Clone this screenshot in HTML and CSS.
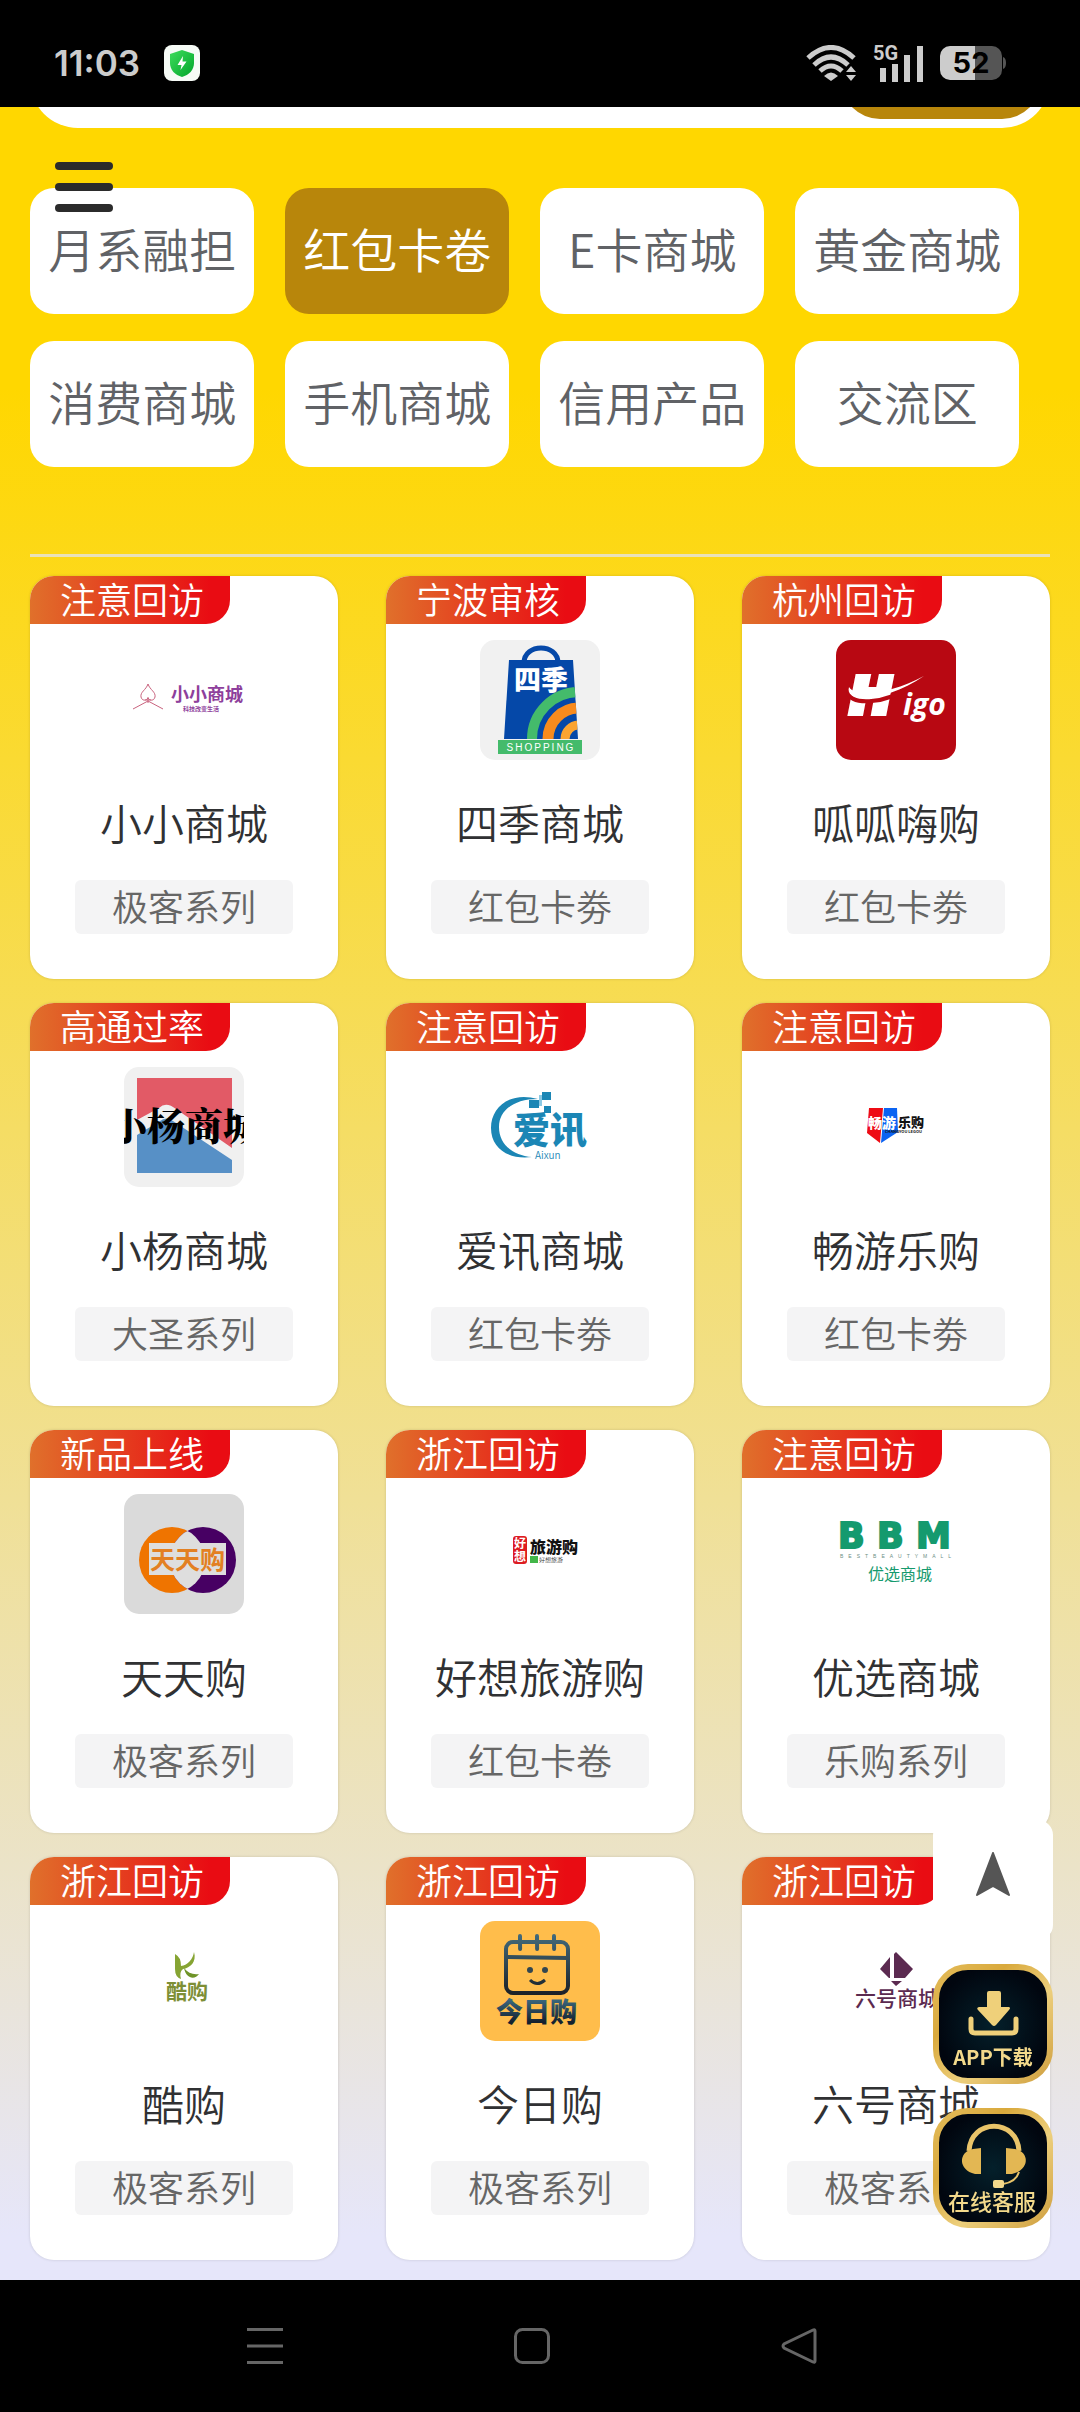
FILE: index.html
```html
<!DOCTYPE html>
<html lang="zh-CN">
<head>
    <meta charset="UTF-8">
    <meta name="viewport" content="width=device-width, initial-scale=1.0">
    <title>红包卡卷</title>
    <link rel="stylesheet" href="styles.css">
</head>
<body>
<header class="status">
    <span class="time">11:03</span>
    <svg class="shield" viewBox="0 0 36 36">
        <defs>
            <linearGradient id="shieldFill" x1="0" y1="0" x2="1" y2="1">
                <stop offset="0" stop-color="#3fdc5c"/>
                <stop offset="1" stop-color="#00a52a"/>
            </linearGradient>
        </defs>
        <rect width="36" height="36" rx="8" fill="#f6fbf6"/>
        <path d="M18 5 L30 9 V18 C30 25 25 30 18 32 C11 30 6 25 6 18 V9 Z" fill="url(#shieldFill)"/>
        <path d="M19 11 L13.500 20 H17.500 L16.500 25 L22.500 16.500 H18.500 Z" fill="#fff"/>
    </svg>
    <div class="status-right">
        <svg class="wifi" viewBox="0 0 52 36">
            <g fill="none" stroke="#ccc" stroke-width="5">
                <path d="M2 13 Q25 -8 48 13"/>
                <path d="M8 20 Q25 4 42 20"/>
                <path d="M14 26 Q25 16 36 26"/>
            </g>
            <path d="M18 31 Q25 24 32 31 L25 36 Z" fill="#ccc"/>
            <path d="M40 27 L45 21 L50 27 Z M40 30 L45 36 L50 30 Z" fill="#ccc"/>
        </svg>
        <svg class="signal" viewBox="0 0 52 38">
            <text x="0" y="16" font-size="20" font-weight="700" fill="#ccc">5G</text>
            <path d="M7 24h6v14h-6z M19 20h6v18h-6z M31 11h6v27h-6z M44 2h6v36h-6z" fill="#ccc"/>
        </svg>
        <svg class="battery" viewBox="0 0 66 34">
            <path d="M35 0h17a10 10 0 0 1 10 10v14a10 10 0 0 1-10 10h-17z" fill="#555"/>
            <path d="M63 11q3 1 3 6t-3 6z" fill="#555"/>
            <path d="M35 0h-25a10 10 0 0 0-10 10v14a10 10 0 0 0 10 10h25z" fill="#ccc"/>
            <text x="31" y="27" text-anchor="middle" font-size="29" font-weight="700">52</text>
        </svg>
    </div>
</header>

<main class="page">
    <form class="search">
        <input type="text" class="search-input" aria-label="搜索">
        <button type="button" class="search-btn" aria-label="搜索"></button>
    </form>

    <button type="button" class="menu-btn" aria-label="菜单"><span></span><span></span><span></span></button>

    <nav class="tabs">
        <a href="#" class="tab">月系融担</a>
        <a href="#" class="tab active">红包卡卷</a>
        <a href="#" class="tab">E卡商城</a>
        <a href="#" class="tab">黄金商城</a>
        <a href="#" class="tab">消费商城</a>
        <a href="#" class="tab">手机商城</a>
        <a href="#" class="tab">信用产品</a>
        <a href="#" class="tab">交流区</a>
    </nav>

    <hr class="line">

    <section class="cards">
        <a href="#" class="card">
            <span class="badge">注意回访</span>
            <svg class="logo" viewBox="0 0 120 120">
                <g fill="none" stroke="#c9637e">
                    <path d="M24 44 C22 50 16 52 17 57 C18 61 22 61 24 58 C26 61 30 61 31 57 C32 52 26 50 24 44 Z"/>
                    <path d="M9 69 L24 61 L39 69 M21 60 H27 M24 57 V63"/>
                </g>
                <text x="47" y="61" font-size="18" font-weight="700" fill="#8e3f9c">小小商城</text>
                <text x="59" y="71" font-size="6" font-weight="700" fill="#8e3f9c">科技改变生活</text>
            </svg>
            <h3 class="name">小小商城</h3>
            <span class="tag">极客系列</span>
        </a>
        <a href="#" class="card">
            <span class="badge">宁波审核</span>
            <svg class="logo" viewBox="0 0 120 120">
                <clipPath id="bag"><path d="M29 20 H93 L98 99 H24 Z"/></clipPath>
                <rect width="120" height="120" fill="#f1f1f1"/>
                <path d="M44 23 C44 3 78 3 78 23" fill="none" stroke="#0548a8" stroke-width="5"/>
                <g clip-path="url(#bag)">
                    <rect width="120" height="120" fill="#0548a8"/>
                    <g fill="none">
                        <circle cx="99" cy="99" r="47" stroke="#44bb6b" stroke-width="10"/>
                        <circle cx="99" cy="99" r="31" stroke="#f98b1d" stroke-width="11"/>
                        <circle cx="99" cy="99" r="14" stroke="#fba432" stroke-width="9"/>
                    </g>
                </g>
                <text x="34" y="50" font-size="27" font-weight="900" fill="#fff">四季</text>
                <rect x="18" y="100" width="84" height="14" fill="#44bb6b"/>
                <text class="spaced" x="61" y="111" text-anchor="middle" font-size="10" fill="#fff">SHOPPING</text>
            </svg>
            <h3 class="name">四季商城</h3>
            <span class="tag">红包卡劵</span>
        </a>
        <a href="#" class="card">
            <span class="badge">杭州回访</span>
            <svg class="logo" viewBox="0 0 120 120">
                <rect width="120" height="120" fill="#b80812"/>
                <text class="higo-h" x="14" y="73" font-size="50" fill="#fff" stroke="#fff" stroke-width="6">H</text>
                <text class="higo" x="67" y="75" font-size="30" fill="#fff">igo</text>
                <path d="M12 50 C10 66 48 66 80 44" fill="none" stroke="#b80812" stroke-width="4"/>
                <path d="M13 47 C8 64 50 62 88 36 C54 54 20 58 13 47 Z" fill="#fff"/>
            </svg>
            <h3 class="name">呱呱嗨购</h3>
            <span class="tag">红包卡劵</span>
        </a>

        <a href="#" class="card">
            <span class="badge">高通过率</span>
            <svg class="logo" viewBox="0 0 120 120">
                <rect width="120" height="120" fill="#f0f0f0"/>
                <path d="M13 11 H108 V81 L52 42 Q42 34 35 41 L13 53 Z" fill="#e25a66"/>
                <path d="M13 68 L36 54 Q42 49 49 54 L108 93 V106 H13 Z" fill="#5790c6"/>
                <text class="song" x="-15" y="73" font-size="38">小杨商城</text>
            </svg>
            <h3 class="name">小杨商城</h3>
            <span class="tag">大圣系列</span>
        </a>
        <a href="#" class="card">
            <span class="badge">注意回访</span>
            <svg class="logo" viewBox="0 0 120 120">
                <path d="M58 32 C30 24 11 40 11 61 C11 81 28 93 52 90 C32 88 19 77 19 60 C19 44 33 32 58 32 Z" fill="#1b86b5"/>
                <path d="M49 33h10v8h-10z M62 25h9v8h-9z M64 39h7v7h-7z" fill="#1b86b5"/>
                <path d="M59 28h3v11h-3z" fill="#8cc9e4"/>
                <text x="33" y="77" font-size="37" font-weight="900" fill="#1b86b5">爱讯</text>
                <text x="55" y="92" font-size="10" fill="#1b86b5">Aixun</text>
            </svg>
            <h3 class="name">爱讯商城</h3>
            <span class="tag">红包卡劵</span>
        </a>
        <a href="#" class="card">
            <span class="badge">注意回访</span>
            <svg class="logo" viewBox="0 0 120 120">
                <path d="M33 41 H47 L44 76 L31 66 Z" fill="#ee0b14"/>
                <path d="M48 41 H61 L62 65 L45 76 Z" fill="#0b63f2"/>
                <text x="32" y="61" font-size="14" font-weight="900" fill="#fff">畅游</text>
                <text x="62" y="60" font-size="13" font-weight="900" fill="#111">乐购</text>
                <text x="49" y="66" font-size="4" font-weight="700" fill="#111">CHANGYOU LEGOU</text>
            </svg>
            <h3 class="name">畅游乐购</h3>
            <span class="tag">红包卡劵</span>
        </a>

        <a href="#" class="card">
            <span class="badge">新品上线</span>
            <svg class="logo" viewBox="0 0 120 120">
                <clipPath id="ring"><circle cx="48" cy="66" r="33"/></clipPath>
                <rect width="120" height="120" fill="#dadada"/>
                <circle cx="48" cy="66" r="33" fill="#ef7400"/>
                <circle cx="79" cy="66" r="33" fill="#470063"/>
                <circle cx="79" cy="66" r="33" fill="#dedede" clip-path="url(#ring)"/>
                <rect x="25" y="49" width="77" height="32" fill="#dedede"/>
                <text x="26" y="75" font-size="25" font-weight="700" fill="#e38022">天天购</text>
            </svg>
            <h3 class="name">天天购</h3>
            <span class="tag">极客系列</span>
        </a>
        <a href="#" class="card">
            <span class="badge">浙江回访</span>
            <svg class="logo" viewBox="0 0 120 120">
                <rect x="33" y="42" width="14" height="28" rx="3" fill="#dd1c22"/>
                <text x="34" y="54" font-size="12" font-weight="700" fill="#fff">好</text>
                <text x="34" y="67" font-size="12" font-weight="700" fill="#fff">想</text>
                <text x="50" y="59" font-size="16" font-weight="900" fill="#111">旅游购</text>
                <rect x="50" y="62" width="8" height="7" fill="#43b649"/>
                <text x="59" y="68" font-size="6" fill="#333">好想旅游</text>
            </svg>
            <h3 class="name">好想旅游购</h3>
            <span class="tag">红包卡卷</span>
        </a>
        <a href="#" class="card">
            <span class="badge">注意回访</span>
            <svg class="logo" viewBox="0 0 120 120">
                <text class="bbm" x="2 41 80" y="54" font-size="35" fill="#159a6e" stroke="#159a6e" stroke-width="2">BBM</text>
                <text class="spaced-wide" x="4" y="64" font-size="5" fill="#6b8f84">BESTBEAUTYMALL</text>
                <text x="32" y="86" font-size="16" font-weight="400" fill="#159a6e">优选商城</text>
            </svg>
            <h3 class="name">优选商城</h3>
            <span class="tag">乐购系列</span>
        </a>

        <a href="#" class="card">
            <span class="badge">浙江回访</span>
            <svg class="logo" viewBox="0 0 120 120">
                <path d="M51 33 Q57 36 57 45 C64 44 69 38 70 31 C73 41 66 47 59 48 Q55 51 57 58 Q51 56 51 48 Z" fill="#86a433"/>
                <path d="M60 47 C64 52 69 54 75 53 C71 59 62 58 60 47 Z" fill="#6f9428"/>
                <text x="42" y="78" font-size="21" font-weight="700" fill="#7d8f35">酷购</text>
            </svg>
            <h3 class="name">酷购</h3>
            <span class="tag">极客系列</span>
        </a>
        <a href="#" class="card">
            <span class="badge">浙江回访</span>
            <svg class="logo" viewBox="0 0 120 120">
                <defs>
                    <linearGradient id="ink" gradientUnits="userSpaceOnUse" x1="0" y1="14" x2="0" y2="74">
                        <stop offset="0" stop-color="#436a7a"/>
                        <stop offset="1" stop-color="#1b2026"/>
                    </linearGradient>
                    <linearGradient id="inkText" x1="0" y1="0" x2="0" y2="1">
                        <stop offset="0.200" stop-color="#3d6a80"/>
                        <stop offset="0.800" stop-color="#14212e"/>
                    </linearGradient>
                </defs>
                <rect width="120" height="120" fill="#ffbd4b"/>
                <g fill="none" stroke="url(#ink)" stroke-width="4">
                    <rect x="26" y="21" width="62" height="51" rx="7"/>
                    <path d="M26 36 L88 37"/>
                    <path d="M40 15 L40.100 28 M57 15 L57.100 28 M74 15 L74.100 28" stroke-linecap="round"/>
                    <path d="M50 59 Q57 66 65 59" stroke-width="3"/>
                </g>
                <circle cx="50" cy="49" r="3" fill="#33464f"/>
                <circle cx="65" cy="49" r="3" fill="#33464f"/>
                <text x="16" y="101" font-size="27" font-weight="900" fill="url(#inkText)">今日购</text>
            </svg>
            <h3 class="name">今日购</h3>
            <span class="tag">极客系列</span>
        </a>
        <a href="#" class="card">
            <span class="badge">浙江回访</span>
            <svg class="logo" viewBox="0 0 120 120">
                <path d="M58 33 L60 31 L77 48 L69 57 H58 Z M54 36 V57 H53 L44 48 Z M55 60 H66 L60 65 Z" fill="#5b2a50"/>
                <text x="19" y="85" font-size="21" font-weight="500" fill="#5b2a50">六号商城</text>
            </svg>
            <h3 class="name">六号商城</h3>
            <span class="tag">极客系列</span>
        </a>
    </section>
</main>

<!-- floating buttons -->
<div class="float-bar">
    <button type="button" class="to-top" aria-label="返回顶部">
        <svg viewBox="0 0 34 44"><path d="M17 1 L33 43 L17 34 L1 43 Z" fill="#555" stroke="#555" stroke-width="2" stroke-linejoin="round"/></svg>
    </button>
    <a href="#" class="gold-btn">
        <svg viewBox="0 0 120 120">
            <defs>
                <linearGradient id="gold" x1="0" y1="0" x2="1" y2="1">
                    <stop offset="0" stop-color="#e3bb59"/>
                    <stop offset="0.300" stop-color="#d9a93c"/>
                    <stop offset="0.600" stop-color="#edcf7c"/>
                    <stop offset="1" stop-color="#d0a040"/>
                </linearGradient>
                <radialGradient id="night">
                    <stop offset="0" stop-color="#04202b"/>
                    <stop offset="1" stop-color="#01060f"/>
                </radialGradient>
            </defs>
            <rect x="3" y="3" width="114" height="114" rx="32" fill="url(#night)" stroke="url(#gold)" stroke-width="6"/>
            <path d="M54 29 Q54 27 56 27 H66 Q68 27 68 29 V43 H76 Q78 44 76 46 L63 61 Q61 63 59 61 L45 46 Q43 44 46 43 H54 Z" fill="#efd07a"/>
            <path d="M38 55 V65 Q38 69 42 69 H79 Q83 69 83 65 V55" fill="none" stroke="#efd07a" stroke-width="5" stroke-linecap="round"/>
            <text x="60" y="101" text-anchor="middle" font-size="20" font-weight="700" fill="#f3d98b">APP下载</text>
        </svg>
    </a>
    <a href="#" class="gold-btn">
        <svg viewBox="0 0 120 120">
            <rect x="3" y="3" width="114" height="114" rx="32" fill="url(#night)" stroke="url(#gold)" stroke-width="6"/>
            <path d="M36 43 C38 10 84 10 86 43" fill="none" stroke="#e9c469" stroke-width="5"/>
            <path d="M48 40 V66 H42 C25 62 25 44 40 41 Z M73 40 V66 H79 C97 62 97 44 82 41 Z" fill="#e3b753"/>
            <path d="M86 64 Q83 74 70 76" fill="none" stroke="#e9c469" stroke-width="2"/>
            <rect x="60" y="72" width="11" height="8" rx="2" fill="#f3d98b"/>
            <text x="59" y="102" text-anchor="middle" font-size="22" font-weight="500" fill="#f3d98b">在线客服</text>
        </svg>
    </a>
</div>

<footer class="sysbar">
    <svg viewBox="0 0 36 36"><path d="M0 1.500h36 M0 18h36 M0 34.500h36" stroke="#666" stroke-width="3"/></svg>
    <svg viewBox="0 0 36 36"><rect x="1.500" y="1.500" width="33" height="33" rx="7" fill="none" stroke="#666" stroke-width="3"/></svg>
    <svg viewBox="0 0 36 36"><path d="M34 3 V33 Q34 35 32 34 L3 20 Q1 18 3 16 L32 2 Q34 1 34 3 Z" fill="none" stroke="#666" stroke-width="3"/></svg>
</footer>
</body>
</html>
```

FILE: styles.css
```css
* {
    box-sizing: border-box;
}

body {
    margin: 0;
    min-height: 100vh;
    display: flex;
    flex-direction: column;
    background: #000;
    font-family: "Noto Sans CJK SC", "Noto Sans", sans-serif;
    font-weight: 350;
}

a {
    color: inherit;
    text-decoration: none;
}

button {
    border: none;
    padding: 0;
    cursor: pointer;
}

/* status bar */
.status {
    height: 107px;
    padding: 18px 74px 0 54px;
    display: flex;
    align-items: center;
    gap: 24px;
    color: #ccc;
}

.time {
    font-family: Inter, sans-serif;
    font-size: 35px;
    font-weight: 600;
}

.shield {
    width: 36px;
    height: 36px;
}

.status-right {
    display: flex;
    align-items: center;
    gap: 15px;
    margin-left: auto;
}

.wifi {
    width: 52px;
    height: 36px;
}

.signal {
    width: 52px;
    height: 38px;
    overflow: visible;
    font-family: Roboto, sans-serif;
}

.battery {
    width: 66px;
    height: 34px;
    font-family: Inter, sans-serif;
}

/* page */
.page {
    flex: 1;
    padding: 0 30px 18px;
    overflow: hidden;
    background: linear-gradient(#ffd700 13%, #e6e6fa 98%);
}

.search {
    display: flex;
    height: 96px;
    margin-top: -75px;
    margin-bottom: 60px;
    padding: 9px;
    background: #fff;
    border-radius: 48px;
}

.search-input {
    flex: 1;
    border: none;
    background: none;
}

.search-btn {
    width: 200px;
    border-radius: 39px;
    background: #b8860b;
}

.menu-btn {
    position: fixed;
    top: 162px;
    left: 55px;
    width: 58px;
    display: flex;
    flex-direction: column;
    gap: 13px;
    background: none;
}

.menu-btn span {
    width: 100%;
    height: 8px;
    border-radius: 4px;
    background: #2b2b2b;
}

.tabs {
    display: flex;
    flex-wrap: wrap;
}

.tab {
    width: 22%;
    height: 126px;
    margin: 0 3% 27px 0;
    line-height: 120px;
    text-align: center;
    font-size: 47px;
    color: #606266;
    white-space: nowrap;
    background: #fff;
    border-radius: 24px;
}

.tab.active {
    color: #fff;
    background: #b8860b;
}

.line {
    margin: 60px 0 19px;
    border: none;
    border-top: 3px solid #e9e1b8;
}

/* shop cards */
.cards {
    display: grid;
    grid-template-columns: repeat(3, 1fr);
    gap: 24px 48px;
}

.card {
    display: flex;
    flex-direction: column;
    overflow: hidden;
    padding-bottom: 45px;
    background: #fff;
    border-radius: 24px;
    box-shadow: 0 0 3px rgba(0, 0, 0, 0.15);
}

.badge {
    width: 200px;
    padding: 0 0 4px 4px;
    line-height: 44px;
    text-align: center;
    font-size: 36px;
    color: #fff;
    background: linear-gradient(to right, #e0702b, #e90c13 90%);
    border-radius: 0 0 24px 0;
}

.logo {
    width: 120px;
    height: 120px;
    margin: 16px auto 0;
    border-radius: 15px;
}

.name {
    margin: 32px 0 28px;
    line-height: 60px;
    text-align: center;
    font-size: 42px;
    font-weight: inherit;
    color: #303133;
}

.tag {
    margin: 0 45px;
    padding-bottom: 4px;
    line-height: 50px;
    text-align: center;
    font-size: 36px;
    color: #666;
    background: #f4f4f5;
    border-radius: 6px;
}

/* lettering inside the logos */
.spaced {
    font-family: "Liberation Sans", sans-serif;
    letter-spacing: 2px;
}

.spaced-wide {
    font-family: "Liberation Sans", sans-serif;
    letter-spacing: 5px;
}

.higo-h {
    font-family: "DejaVu Sans", sans-serif;
    font-weight: 700;
    font-style: italic;
}

.higo {
    font-family: "Open Sans", sans-serif;
    font-weight: 700;
    font-style: italic;
}

.song {
    font-family: "Noto Serif CJK SC", "Noto Sans CJK SC", serif;
    font-weight: 900;
}

.bbm {
    font-family: "DejaVu Sans", sans-serif;
    font-weight: 700;
}

/* floating buttons */
.float-bar {
    position: fixed;
    right: 27px;
    bottom: 184px;
    width: 120px;
    display: flex;
    flex-direction: column;
    gap: 24px;
}

.to-top {
    height: 120px;
    display: flex;
    align-items: center;
    justify-content: center;
    padding-bottom: 12px;
    background: #fff;
    border-radius: 15px;
}

.to-top svg {
    width: 34px;
    height: 44px;
}

.gold-btn {
    height: 120px;
}

/* system buttons */
.sysbar {
    height: 132px;
    padding: 0 263px 0 247px;
    display: flex;
    align-items: center;
    justify-content: space-between;
}

.sysbar svg {
    width: 36px;
    height: 36px;
}
```
